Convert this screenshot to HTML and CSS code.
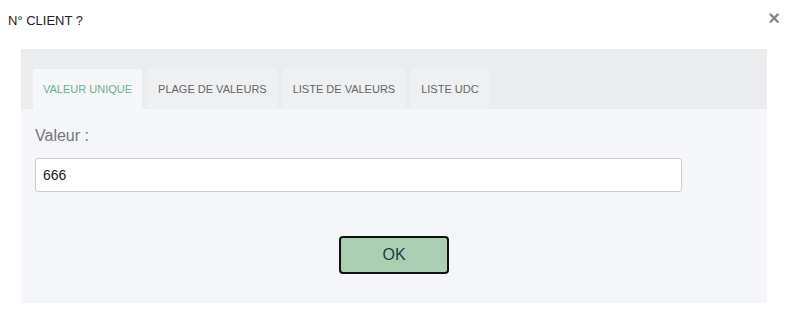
FILE: index.html
```html
<!DOCTYPE html>
<html lang="fr">
<head>
    <meta charset="UTF-8">
    <title>N° client</title>
    <link rel="stylesheet" href="styles.css">
</head>
<body>
    <div class="dialog">
        <div class="dialog-head">
            <span class="dialog-title">N° CLIENT ?</span>
            <span class="close">&times;</span>
        </div>

        <div class="panel">
            <ul class="tabs">
                <li class="tab active">VALEUR UNIQUE</li>
                <li class="tab">PLAGE DE VALEURS</li>
                <li class="tab">LISTE DE VALEURS</li>
                <li class="tab">LISTE UDC</li>
            </ul>
            <div class="tab-body">
                <label class="field-label" for="valeur">Valeur :</label>
                <input type="text" id="valeur" class="field-input" value="666">
                <div class="actions">
                    <button class="ok-btn">OK</button>
                </div>
            </div>
        </div>
    </div>
</body>
</html>
```

FILE: styles.css
```css
body, html {
    margin: 0;
    padding: 0;
    background-color: #fff;
    font-family: 'Liberation Sans', Arial, sans-serif;
    color: #222;
}

.dialog {
    width: 787px;
    height: 312px;
}

.dialog-head {
    display: flex;
    justify-content: space-between;
    align-items: center;
    height: 40px;
    padding: 0 7px 0 8px;
}

.dialog-title {
    font-size: 13px;
    color: #222;
}

.close {
    font-size: 20px;
    font-weight: bold;
    color: #888;
    line-height: 1;
    margin-top: -4px;
}

.panel {
    margin: 9px 20px 0 21px;
    height: 254px;
    background-color: #f5f6f9;
    display: flex;
    flex-direction: column;
}

.tabs {
    list-style: none;
    margin: 0;
    padding: 20px 12px 0;
    background-color: #ebecee;
    display: flex;
    gap: 6px;
    height: 40px;
}

.tab {
    background-color: #eff0f2;
    color: #666;
    font-size: 11px;
    padding: 0 10px;
    display: flex;
    align-items: center;
}

.tab.active {
    background-color: #f5f6f9;
    color: #5fb68d;
}

.tab-body {
    padding: 18px 14px 0;
}

.field-label {
    display: block;
    font-size: 16px;
    color: #777;
    margin-bottom: 13px;
}

.field-input {
    box-sizing: border-box;
    width: 647px;
    height: 34px;
    border: 1px solid #ccc;
    border-radius: 3px;
    padding: 0 7px;
    font-family: 'Liberation Sans', Arial, sans-serif;
    font-size: 14px;
    color: #222;
    background: #fff;
}

.actions {
    display: flex;
    justify-content: center;
    margin-top: 44px;
}

.ok-btn {
    width: 110px;
    height: 38px;
    background-color: #a8cfb0;
    border: 2px solid #111;
    border-radius: 4px;
    font-family: 'Liberation Sans', Arial, sans-serif;
    font-size: 16px;
    color: #1f3b4a;
    cursor: pointer;
}
```
